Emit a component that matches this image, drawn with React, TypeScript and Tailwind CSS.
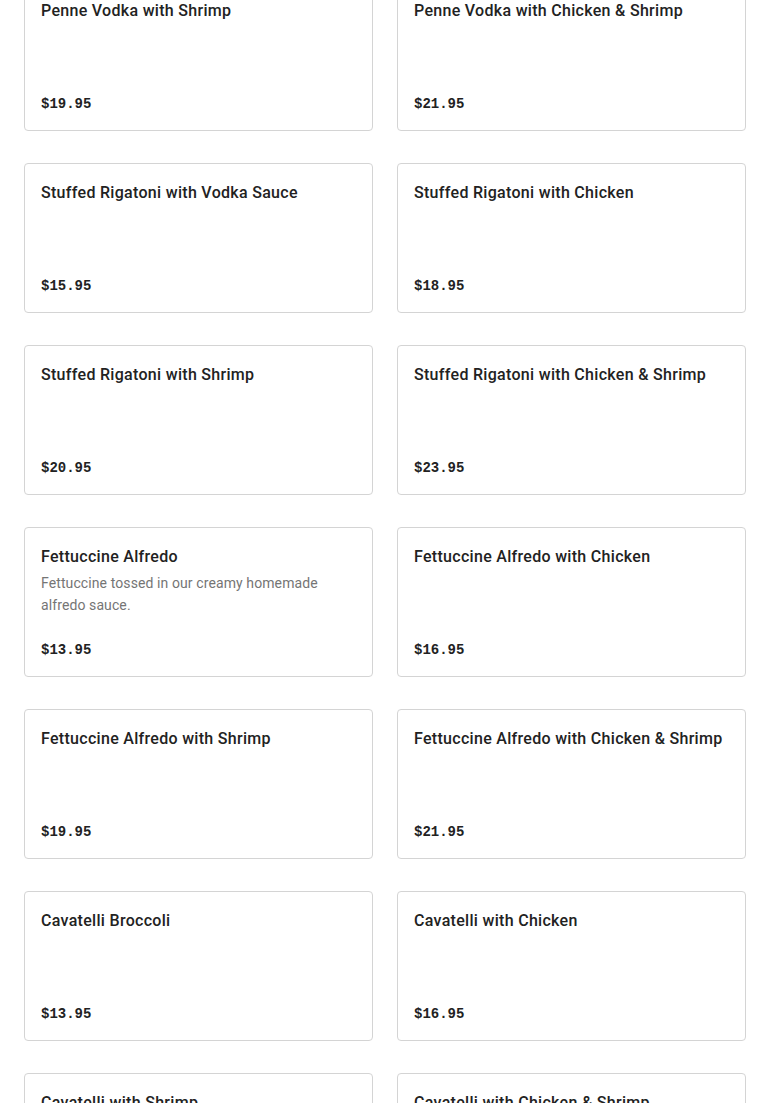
import React from "react";

type Item = { name: string; desc?: string; price: string };

const items: Item[] = [
  { name: "Penne Vodka with Shrimp", price: "$19.95" },
  { name: "Penne Vodka with Chicken & Shrimp", price: "$21.95" },
  { name: "Stuffed Rigatoni with Vodka Sauce", price: "$15.95" },
  { name: "Stuffed Rigatoni with Chicken", price: "$18.95" },
  { name: "Stuffed Rigatoni with Shrimp", price: "$20.95" },
  { name: "Stuffed Rigatoni with Chicken & Shrimp", price: "$23.95" },
  {
    name: "Fettuccine Alfredo",
    desc: "Fettuccine tossed in our creamy homemade alfredo sauce.",
    price: "$13.95",
  },
  { name: "Fettuccine Alfredo with Chicken", price: "$16.95" },
  { name: "Fettuccine Alfredo with Shrimp", price: "$19.95" },
  { name: "Fettuccine Alfredo with Chicken & Shrimp", price: "$21.95" },
  { name: "Cavatelli Broccoli", price: "$13.95" },
  { name: "Cavatelli with Chicken", price: "$16.95" },
  { name: "Cavatelli with Shrimp", price: "$19.95" },
  { name: "Cavatelli with Chicken & Shrimp", price: "$21.95" },
];

export default function App() {
  return (
    <div className="h-[1103px] overflow-hidden bg-white">
      <div className="-mt-[19px] grid grid-cols-2 gap-x-6 gap-y-8 px-6">
        {items.map((it, i) => (
          <div
            key={i}
            className="flex h-[150px] flex-col justify-between rounded-[4px] border border-[#d4d4d4] bg-white px-4 pt-[17px] pb-[16px]"
          >
            <div>
              <div
                className="text-[16px] leading-[24px] font-medium tracking-[0.3px] text-[#222]"
                style={{ fontFamily: "Roboto, 'Noto Sans', sans-serif" }}
              >
                {it.name}
              </div>
              {it.desc && (
                <div
                  className="mt-[3px] pr-6 text-[14px] leading-[22px] tracking-[0.1px] text-[#757575]"
                  style={{ fontFamily: "Roboto, 'Noto Sans', sans-serif" }}
                >
                  {it.desc}
                </div>
              )}
            </div>
            <div
              className="text-[14px] leading-[20px] font-bold text-[#222]"
              style={{ fontFamily: "'Liberation Mono', 'DejaVu Sans Mono', monospace" }}
            >
              {it.price}
            </div>
          </div>
        ))}
      </div>
    </div>
  );
}
